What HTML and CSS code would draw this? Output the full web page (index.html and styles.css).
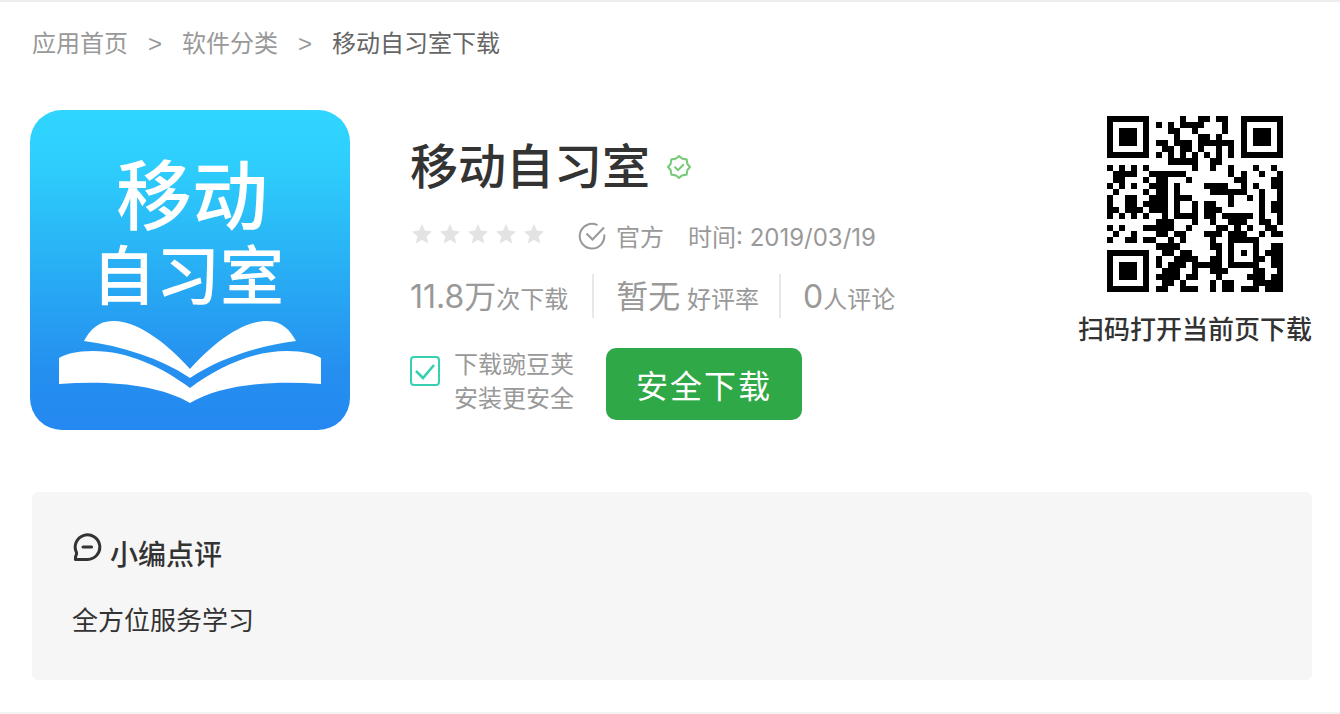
FILE: index.html
```html
<!DOCTYPE html>
<html lang="zh-CN">

<head>
    <meta charset="UTF-8">
    <meta name="viewport" content="width=device-width, initial-scale=1.0">
    <title>移动自习室下载</title>
    <link rel="stylesheet" href="styles.css">
</head>

<body>
    <div class="page">
        <nav class="crumb">
            <a href="#">应用首页</a>
            <span class="sep">&gt;</span>
            <a href="#">软件分类</a>
            <span class="sep">&gt;</span>
            <span class="current">移动自习室下载</span>
        </nav>

        <div class="detail">
            <svg class="app-icon" viewBox="0 0 320 320" role="img" aria-label="移动自习室">
                <defs>
                    <linearGradient id="iconBg" x1="0" y1="0" x2="0" y2="1">
                        <stop offset="0" stop-color="#2fd6ff"/>
                        <stop offset="0.18" stop-color="#2ecdfc"/>
                        <stop offset="0.5" stop-color="#28aef4"/>
                        <stop offset="0.8" stop-color="#2590f0"/>
                        <stop offset="1" stop-color="#2488f0"/>
                    </linearGradient>
                </defs>
                <rect width="320" height="320" rx="32" fill="url(#iconBg)"/>
                <text class="icon-line1" x="162" y="114">移动</text>
                <text class="icon-line2" x="158" y="189">自习室</text>
                <path fill="#fff" d="M54 231C60 220 68 211 83 211C112 211 143 240 160 259C177 240 208 211 237 211C252 211 260 220 266 231C228 236 190 248 160 268C130 248 92 236 54 231Z"/>
                <path fill="#fff" d="M29 248C36 244 46 241 63 241C98 241 132 257 160 278C188 257 222 241 257 241C274 241 284 244 291 248V274C240 270 190 275 160 293C130 275 80 270 29 274Z"/>
            </svg>

            <div class="info">
                <div class="title-row">
                    <h1>移动自习室</h1>
                    <svg class="badge" viewBox="0 0 26 26">
                        <path d="M13 2L16 4.6L20.6 5.4L21.4 10L24 13L21.4 16L20.6 20.6L16 21.4L13 24L10 21.4L5.4 20.6L4.6 16L2 13L4.6 10L5.4 5.4L10 4.6Z"/>
                        <path d="M8.5 12.8L12 16.2L17.8 10.2"/>
                    </svg>
                </div>

                <div class="meta">
                    <div class="stars" id="stars"></div>
                    <svg class="official" viewBox="0 0 28 28">
                        <path d="M19.5 3.2A12.3 12.3 0 1 0 26.2 12.5"/>
                        <path d="M8.5 11.5L14.5 17.5L26 5.5"/>
                    </svg>
                    <span>官方</span>
                    <span class="time">时间: 2019/03/19</span>
                </div>

                <div class="counts">
                    <div class="count"><b>11.8万</b>次下载</div>
                    <div class="count"><b>暂无</b> 好评率</div>
                    <div class="count"><b>0</b>人评论</div>
                </div>

                <div class="actions">
                    <input type="checkbox" id="safe" checked>
                    <label for="safe">下载豌豆荚<br>安装更安全</label>
                    <button type="button">安全下载</button>
                </div>
            </div>

            <div class="qr">
                <svg id="qrcode" viewBox="0 0 29 29" shape-rendering="crispEdges"></svg>
                <p>扫码打开当前页下载</p>
            </div>
        </div>

        <div class="review">
            <h2>
                <svg viewBox="0 0 30 30">
                    <path d="M3.4 27.4H15.5A12.3 12.3 0 1 0 4.4 20.4C5 21.8 4.4 22.6 3.6 24.4Z"/>
                    <path d="M11 15H19.6"/>
                </svg>
                小编点评
            </h2>
            <p>全方位服务学习</p>
        </div>
    </div>

    <script>
        const svgNS = 'http://www.w3.org/2000/svg';

        // Empty rating stars
        const stars = document.getElementById('stars');
        for (let i = 0; i < 5; i++) {
            const star = document.createElementNS(svgNS, 'svg');
            star.setAttribute('viewBox', '0 0 20 20');
            star.innerHTML = '<path d="M10 0L12.8 6.6L20 7.4L14.6 12.2L16.2 19.4L10 15.8L3.8 19.4L5.4 12.2L0 7.4L7.2 6.6Z"/>';
            stars.appendChild(star);
        }

        // QR code modules, one string per row
        const rows = [
            '#######.....#..##.##..#######',
            '#.....#.#.#.####...#..#.....#',
            '#.###.#...##..#....#..#.###.#',
            '#.###.#....#...##.#...#.###.#',
            '#.###.#.##.###.######.#.###.#',
            '#.....#..##.##.#..#.#.#.....#',
            '#######.#.#.#.#.#.#.#.#######',
            '..........#####..##..........',
            '#.#.#.#.......#..#..#...#..#.',
            '.####..######.......#.#..#..#',
            '.##...#.##...#.......##....##',
            '#.#.#..###.#....####..#.#..##',
            '.#....#.##.#.....######..#..#',
            '#..##..###.###......#..#.#..#',
            '#..##.####.#..#.##..#....#.##',
            '##.###.###.#..#.###......#.##',
            '#.#.#.#..#.####.##.#####.#..#',
            '........###...#..#..###..##.#',
            '#.#...#####..#....##.#.#..##.',
            '.#..#...##.##...###.###..#.##',
            '#..##.##..#.#....#..#####....',
            '........####.....##.#...#..##',
            '#######..##.##....#.#.#.#.###',
            '#.....#.#..####..##.#...##.##',
            '#.###.#.#.###.#####.#####..##',
            '#.###.#..###..#..###....##..#',
            '#.###.#.####.##...#....###.##',
            '#.....#..##.#....#.##...#####',
            '#######.##..###..#.##.###.###'
        ];
        const path = document.createElementNS(svgNS, 'path');
        let d = '';
        rows.forEach((row, y) => {
            for (let x = 0; x < row.length; x++) {
                if (row[x] === '#') d += `M${x} ${y}h1v1h-1z`;
            }
        });
        path.setAttribute('d', d);
        document.getElementById('qrcode').appendChild(path);
    </script>
</body>

</html>
```
FILE: styles.css
```css
* {
    box-sizing: border-box;
}

body {
    margin: 0;
    font-family: Inter, "Noto Sans CJK SC", sans-serif;
    font-size: 24px;
    color: #999;
    background: #fff;
}

h1, h2, p {
    margin: 0;
}

svg {
    display: block;
    flex: none;
}

.page {
    border-top: 2px solid #ededed;
    border-bottom: 2px solid #f2f2f2;
    padding: 24px 28px 32px 32px;
}

.crumb {
    display: flex;
    gap: 20px;
    line-height: 36px;
}

.crumb a {
    color: #999;
    text-decoration: none;
}

.crumb .sep {
    font-family: "Liberation Sans", sans-serif;
}

.crumb .current {
    color: #666;
}

.detail {
    display: flex;
    margin: 48px 0 62px -2px;
}

.app-icon {
    width: 320px;
    height: 320px;
}

.icon-line1, .icon-line2 {
    fill: #fff;
    font-family: "Noto Sans CJK SC", sans-serif;
    font-weight: 500;
    text-anchor: middle;
}

.icon-line1 {
    font-size: 76px;
}

.icon-line2 {
    font-size: 64px;
}

.info {
    flex: 1;
    margin-left: 60px;
    padding-top: 24px;
}

.title-row {
    display: flex;
    align-items: center;
    gap: 16px;
}

h1 {
    font-size: 48px;
    font-weight: 500;
    line-height: 66px;
    color: #333;
}

.badge {
    width: 26px;
    height: 26px;
    fill: none;
    stroke: #76c976;
    stroke-width: 2;
}

.meta {
    display: flex;
    align-items: center;
    line-height: 36px;
    margin-top: 20px;
}

.stars {
    display: flex;
    gap: 8px;
    margin: 0 34px 8px 2px;
}

.stars svg {
    width: 20px;
    height: 20px;
    fill: #e3e3e3;
}

.official {
    width: 28px;
    height: 28px;
    margin: 0 10px 4px 0;
    fill: none;
    stroke: #999;
    stroke-width: 2;
}

.time {
    margin-left: 24px;
}

.counts {
    display: flex;
    margin-top: 18px;
    line-height: 46px;
}

.count {
    height: 44px;
    padding: 0 20px 0 22px;
    border-left: 2px solid #e8e8e8;
    white-space: nowrap;
}

.count:first-child {
    padding: 0 24px 0 0;
    border-left: 0;
}

.count b {
    font-size: 32px;
    font-weight: 400;
}

.actions {
    display: flex;
    align-items: flex-start;
    margin-top: 30px;
}

.actions input {
    appearance: none;
    width: 30px;
    height: 30px;
    margin: 8px 14px 0 0;
    border: 2px solid #36cfb0;
    border-radius: 4px;
    background: #fff url("data:image/svg+xml,%3Csvg xmlns='http://www.w3.org/2000/svg' viewBox='0 0 26 26'%3E%3Cpath d='M4 13L11 20L22 7' fill='none' stroke='%2336cfb0' stroke-width='2.6'/%3E%3C/svg%3E");
}

.actions label {
    line-height: 34px;
}

.actions button {
    margin-left: 32px;
    padding: 0 30px;
    height: 72px;
    border: 0;
    border-radius: 10px;
    background: #2fa847;
    color: #fff;
    font-family: inherit;
    font-size: 32px;
    letter-spacing: 2px;
    cursor: pointer;
}

.qr {
    display: flex;
    flex-direction: column;
    align-items: center;
    padding-top: 6px;
}

.qr svg {
    width: 176px;
    height: 176px;
}

.qr p {
    margin-top: 18px;
    font-size: 26px;
    font-weight: 500;
    line-height: 40px;
    color: #333;
}

.review {
    padding: 40px;
    border-radius: 6px;
    background: #f6f6f6;
    color: #333;
}

.review h2 {
    display: flex;
    gap: 8px;
    font-size: 28px;
    font-weight: 500;
    line-height: 46px;
}

.review h2 svg {
    width: 30px;
    height: 30px;
    fill: none;
    stroke: #333;
    stroke-width: 3;
    stroke-linejoin: round;
    stroke-linecap: round;
}

.review p {
    margin-top: 24px;
    font-size: 26px;
    line-height: 38px;
}
```
